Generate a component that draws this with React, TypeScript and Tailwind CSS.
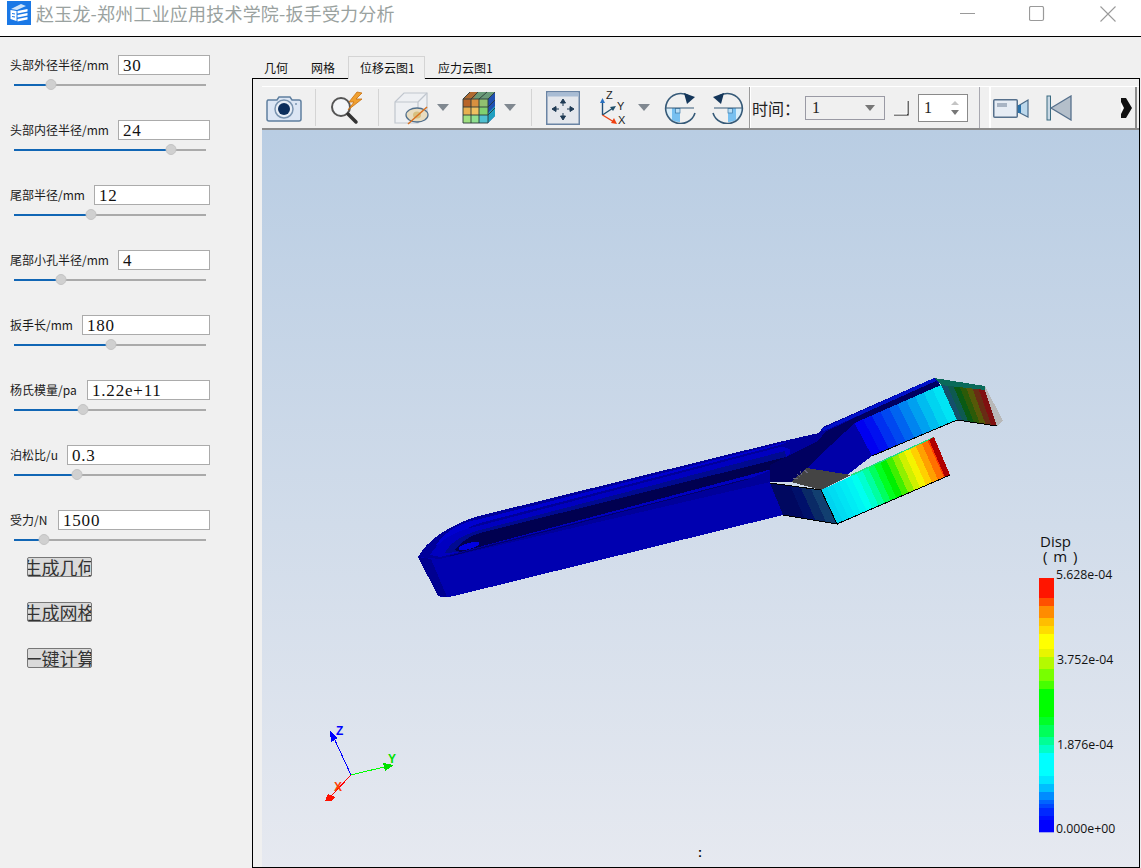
const CJK = "font-['Noto_Sans_CJK_SC','Noto_Sans',sans-serif]";

const FIELDS = [
  { label: '头部外径半径/mm', value: '30', labelW: 'w-[108px]', thumb: 51 },
  { label: '头部内径半径/mm', value: '24', labelW: 'w-[108px]', thumb: 171 },
  { label: '尾部半径/mm', value: '12', labelW: 'w-[84px]', thumb: 91 },
  { label: '尾部小孔半径/mm', value: '4', labelW: 'w-[108px]', thumb: 61 },
  { label: '扳手长/mm', value: '180', labelW: 'w-[72px]', thumb: 111 },
  { label: '杨氏模量/pa', value: '1.22e+11', labelW: 'w-[77px]', thumb: 83 },
  { label: '泊松比/u', value: '0.3', labelW: 'w-[57px]', thumb: 77 },
  { label: '受力/N', value: '1500', labelW: 'w-[48px]', thumb: 44 },
];

const BUTTONS = [
  { label: '生成几何', mt: 'mt-0' },
  { label: '生成网格', mt: 'mt-[25px]' },
  { label: '一键计算', mt: 'mt-[26px]' },
];

const LEGEND: [number, string][] = [
  [174, '#ff1500'], [234, '#ff5000'], [258, '#ff8c00'], [294, '#ffbe00'], [318, '#ffdc00'],
  [342, '#ffff00'], [387, '#e8f500'], [411, '#b4fa00'], [447, '#78ff00'], [483, '#46ff00'],
  [507, '#00ff00'], [591, '#00ff28'], [615, '#00ff5a'], [651, '#00ff96'], [675, '#00ffc8'],
  [699, '#00ffff'], [768, '#00e6ff'], [792, '#00beff'], [816, '#008cff'], [840, '#0064ff'],
  [852, '#0046ff'], [864, '#0028ff'], [888, '#000fff'], [900, '#0000ff'],
];

const LOWER_JAW = ['#00d4f0', '#00dcf2', '#00e4f4', '#00ecf4', '#00f4f4', '#00fff0', '#00ffd0', '#00ffa0', '#00ff60', '#00ff20', '#00f000', '#40f000', '#90f000', '#d0f000', '#f4f400', '#ffd000', '#ffa000', '#ff7000', '#ff3800'];
const UPPER_JAW = ['#0000f0', '#0010f0', '#0030f0', '#0048f0', '#0064f0', '#0084f0', '#00a0f0', '#00bcf0', '#00d4f0', '#00e4f4'];
const TIP = ['#14506a', '#0e5a50', '#0a5a14', '#2c5a08', '#565808', '#682c14', '#801010'];

type Pt = [number, number];

// slice a quad a-b-c-d into colour bands running from edge a-d to edge b-c
function Bands({ a, b, c, d, colors }: { a: Pt; b: Pt; c: Pt; d: Pt; colors: string[] }) {
  const mix = (p: Pt, q: Pt, t: number) => `${p[0] + (q[0] - p[0]) * t},${p[1] + (q[1] - p[1]) * t}`;
  return (
    <>
      {colors.map((color, i) => {
        const t0 = i / colors.length;
        const t1 = (i + 1) / colors.length;
        return <polygon key={i} fill={color} points={`${mix(a, b, t0)} ${mix(a, b, t1)} ${mix(d, c, t1)} ${mix(d, c, t0)}`} />;
      })}
    </>
  );
}

function Wrench() {
  return (
    <g shapeRendering="crispEdges">
      {/* handle rim */}
      <path fill="#00009a" d="M418 557Q432 532 475 517L779 442L819 433L823 427L934 378L942 381L900 410L854 423L846 475L790 482L770 482L440 559Z" />
      <path fill="#0000d0" d="M436 545Q450 524 480 519L790 441L780 445L480 523Q462 528 445 548Z" />
      {/* pocket */}
      <path fill="#0000c0" d="M430 555Q443 533 478 526L780 447Q795 447 788 456Q780 470 740 481L440 557Z" />
      <path fill="#000a90" d="M445 553Q452 538 480 530L785 451L786 457L480 536L458 552Z" />
      <path fill="#000050" d="M455 550Q465 537 480 533L786 457Q782 464 772 469L460 552Z" />
      <line x1="450" y1="556" x2="748" y2="479" stroke="#000070" strokeWidth="1" />
      <ellipse cx="469" cy="546" rx="11" ry="3" fill="#0000e0" transform="rotate(-16 469 546)" />
      <polygon fill="#000060" points="825,432 934,380 941,385 855,423 846,440 815,445" />
      <polygon fill="#0010c8" points="821,429 934,378 936,381 824,431" />
      {/* handle side */}
      <path fill="#0000b0" d="M418 557L440 559L770 482L783 515L454 596Q445 598 438 596Z" />
      <polygon fill="#000090" points="418,557 431,559 447,597 438,596" />
      {/* jaw root */}
      <polygon fill="#000060" points="770,465 810,445 854,423 807,468 791,482 770,482" />
      <polygon fill="#0000a8" points="854.5,423 872,456 847,475 807,468" />
      <polygon fill="#444444" points="807,468 851,475 821,490 791,482" />
      <path d="M797 474l3 3M800 471l2 4M804 470l4 3M793 478l5 1" stroke="#6a6a80" strokeWidth="1" />
      {/* front block */}
      <Bands a={[770, 483]} b={[821, 490]} c={[837, 524]} d={[783, 515]} colors={['#000860', '#000860', '#00106a', '#0a2a66', '#123f70']} />
      <polyline points="770,483 821,490 837,524 783,515" fill="none" stroke="#000" strokeWidth="1" />
      {/* upper jaw */}
      <Bands a={[854.5, 423]} b={[941, 385]} c={[957, 420]} d={[872, 456]} colors={UPPER_JAW} />
      <Bands a={[941, 385]} b={[985, 390]} c={[997, 426]} d={[957, 420]} colors={TIP} />
      <polygon fill="#0a6a5a" points="934,378 985,386 985,390 941,385" />
      <polygon fill="#b8b8b8" points="985,386 1003,421 997,426 985,390" />
      <line x1="872" y1="456" x2="957" y2="420" stroke="#000" strokeWidth="1" />
      <line x1="957" y1="420" x2="997" y2="426" stroke="#000" strokeWidth="1" />
      {/* lower jaw */}
      <polygon fill="#20e080" points="850,475 933,437 935,440 852,476" />
      <Bands a={[821, 490]} b={[933.6, 438]} c={[950, 475]} d={[837, 524]} colors={LOWER_JAW} />
      <polygon fill="#b00000" points="929,440 934,437 950,475 945,477" />
      <polyline points="821,490 837,524 950,475" fill="none" stroke="#000" strokeWidth="1" />
    </g>
  );
}

function Axes() {
  return (
    <g shapeRendering="crispEdges">
      <line x1="351" y1="775" x2="333" y2="736" stroke="#0000ff" strokeWidth="1" />
      <polygon fill="#0000ff" points="330,731 338,738 331,742" />
      <line x1="351" y1="775" x2="388" y2="766" stroke="#00ff00" strokeWidth="1" />
      <polygon fill="#00e000" points="394,765 383,763 385,771" />
      <line x1="351" y1="775" x2="331" y2="796" stroke="#ff0000" strokeWidth="1" />
      <polygon fill="#ff1000" points="325,801 328,794 335,797 331,801" />
      <text x="336" y="735" fontSize="12" fontWeight="700" fill="#0000ff" fontFamily="'Liberation Sans',sans-serif">Z</text>
      <text x="388" y="763" fontSize="12" fontWeight="700" fill="#00e000" fontFamily="'Liberation Sans',sans-serif">Y</text>
      <text x="334" y="791" fontSize="12" fontWeight="700" fill="#ff4000" fontFamily="'Liberation Sans',sans-serif">X</text>
    </g>
  );
}

function Legend() {
  const font = "'Open Sans','Liberation Sans',sans-serif";
  return (
    <g>
      {LEGEND.map(([y, color], i) => {
        const next = i + 1 < LEGEND.length ? LEGEND[i + 1][0] : 936;
        return <rect key={y} x="1039" y={520 + y / 3} width="15" height={(next - y) / 3 + 0.3} fill={color} />;
      })}
      <text x="1040" y="547" fontSize="15" fill="#111" fontFamily={font}>Disp</text>
      <text x="1043" y="562" fontSize="15" letterSpacing="1" fill="#111" fontFamily={font} xmlSpace="preserve">( m )</text>
      {[['5.628e-04', 1056, 579], ['3.752e-04', 1057, 664], ['1.876e-04', 1057, 749], ['0.000e+00', 1056, 833]].map(([t, x, y]) => (
        <text key={t as string} x={x} y={y} fontSize="12.3" fill="#111" fontFamily={font}>{t}</text>
      ))}
    </g>
  );
}

function Caret() {
  return <svg width="12" height="7" viewBox="0 0 12 7"><polygon points="0,0 12,0 6,7" fill="#808890" /></svg>;
}

function Sep() {
  return <div className="h-[37px] w-px bg-[#d4d4d4]" />;
}

function CameraIcon() {
  return (
    <svg width="36" height="32" viewBox="0 0 36 32">
      <path d="M2 8h9l2-3h11l2 3h7a2 2 0 0 1 2 2v17a2 2 0 0 1-2 2H3a2 2 0 0 1-2-2V10a2 2 0 0 1 1-2z" fill="#dce6f4" stroke="#5f7f9f" strokeWidth="1.5" />
      <circle cx="18" cy="17" r="9" fill="#e8eef6" stroke="#7a94b0" strokeWidth="1.5" />
      <circle cx="18" cy="17" r="6" fill="#0d2f5c" />
      <circle cx="30" cy="12" r="1" fill="#7a94b0" />
    </svg>
  );
}

function SearchBoltIcon() {
  return (
    <svg width="36" height="34" viewBox="0 0 36 34">
      <circle cx="13" cy="16" r="9" fill="#f4f6f8" stroke="#555" strokeWidth="2" />
      <line x1="20" y1="23" x2="28" y2="31" stroke="#333" strokeWidth="3.5" strokeLinecap="round" />
      <polygon points="29,1 21,11 26,11 20,19 34,8 28,8 34,2" fill="#f0a030" stroke="#c87010" strokeWidth="0.8" />
    </svg>
  );
}

function CubeEyeIcon() {
  return (
    <svg width="36" height="34" viewBox="0 0 36 34">
      <polygon points="1,11 10,2 33,2 33,23 24,32 1,32" fill="#eef0f3" stroke="#c0c6ce" strokeWidth="1.2" />
      <polyline points="1,11 24,11 24,32" fill="none" stroke="#c0c6ce" strokeWidth="1.2" />
      <line x1="24" y1="11" x2="33" y2="2" stroke="#c0c6ce" strokeWidth="1.2" />
      <ellipse cx="23" cy="24" rx="11" ry="7" fill="#e8dcc0" stroke="#52708c" strokeWidth="1.3" />
      <ellipse cx="23" cy="24" rx="4" ry="3.5" fill="#d8c080" />
      <line x1="14" y1="33" x2="33" y2="16" stroke="#d87020" strokeWidth="1.5" />
    </svg>
  );
}

function ColorCubeIcon() {
  return (
    <svg width="34" height="34" viewBox="0 0 34 34">
      <polygon points="1,8 8,1 33,1 26,8" fill="#6a9a78" />
      <polygon points="8,1 16,1 11,8 1,8" fill="#b06a30" />
      <rect x="1" y="8" width="8" height="8" fill="#b86428" />
      <rect x="9" y="8" width="8" height="8" fill="#d89040" />
      <rect x="17" y="8" width="9" height="8" fill="#90c070" />
      <rect x="1" y="16" width="8" height="8" fill="#e8b050" />
      <rect x="9" y="16" width="8" height="8" fill="#f0c060" />
      <rect x="17" y="16" width="9" height="8" fill="#80d070" />
      <rect x="1" y="24" width="8" height="8" fill="#a0e080" />
      <rect x="9" y="24" width="8" height="8" fill="#90e090" />
      <rect x="17" y="24" width="9" height="8" fill="#50c0d0" />
      <polygon points="26,8 33,1 33,25 26,32" fill="#2050b0" />
      <polygon points="26,22 33,15 33,25 26,32" fill="#20a0c0" />
      <path d="M1 8h25v24H1zM1 16h25M1 24h25M9 8v24M17 8v24M26 8l7-7M26 16l7-7M26 24l7-7M8 1l-7 7M16 1l-7 7M25 1l-8 7" fill="none" stroke="#2a3a3a" strokeWidth="0.9" />
    </svg>
  );
}

function FitIcon() {
  return (
    <svg width="34" height="34" viewBox="0 0 34 34">
      <rect x="0.75" y="0.75" width="32.5" height="32.5" fill="#e4e7ec" stroke="#6a84a4" strokeWidth="1.5" />
      <rect x="1.5" y="1.5" width="31" height="4" fill="#a8bcd4" />
      <g stroke="#1e3a54" strokeWidth="1" fill="#1e3a54">
        <line x1="17" y1="10" x2="17" y2="15" />
        <polygon points="17,8 14.5,12 19.5,12" />
        <line x1="17" y1="22" x2="17" y2="27" />
        <polygon points="17,29 14.5,25 19.5,25" />
        <line x1="8" y1="18" x2="13" y2="18" />
        <polygon points="6,18 10,15.5 10,20.5" />
        <line x1="21" y1="18" x2="26" y2="18" />
        <polygon points="28,18 24,15.5 24,20.5" />
      </g>
    </svg>
  );
}

function AxesIcon() {
  return (
    <svg width="30" height="36" viewBox="0 0 30 36">
      <line x1="2.5" y1="25" x2="2.5" y2="12" stroke="#20507a" strokeWidth="1.4" />
      <polygon points="2.5,8 0,13 5,13" fill="#2a70c0" />
      <line x1="2.5" y1="25" x2="13" y2="18" stroke="#20506a" strokeWidth="1.4" />
      <polygon points="16,16 10,17 13,21" fill="#20506a" />
      <line x1="2.5" y1="25" x2="14" y2="32" stroke="#f04010" strokeWidth="1.4" />
      <polygon points="17,34 11,33 14,28" fill="#f04010" />
      <text x="6" y="9" fontSize="11" fill="#222" fontFamily="'Liberation Sans',sans-serif">Z</text>
      <text x="17" y="20" fontSize="11" fill="#222" fontFamily="'Liberation Sans',sans-serif">Y</text>
      <text x="18" y="34" fontSize="11" fill="#222" fontFamily="'Liberation Sans',sans-serif">X</text>
    </svg>
  );
}

function RotateIcon({ flip }: { flip?: boolean }) {
  return (
    <svg width="32" height="32" viewBox="0 0 32 32" className={flip ? '-scale-x-100' : ''}>
      <path d="M16 16H2A14 14 0 0 0 16 30Z" fill="#d8eefa" />
      <path d="M16 16H8V28A14 14 0 0 0 16 30Z" fill="#78c0f0" />
      <rect x="11.5" y="16.5" width="4.5" height="4.5" fill="#b8def6" stroke="#3a7aaa" strokeWidth="0.7" />
      <path d="M31 21A15 15 0 1 1 24 3.5" fill="none" stroke="#365a78" strokeWidth="1.6" />
      <line x1="1" y1="16" x2="30" y2="16" stroke="#365a78" strokeWidth="1" />
      <polygon points="20,1 31,5 23,12" fill="#14365a" />
    </svg>
  );
}

function VideoIcon() {
  return (
    <svg width="36" height="22" viewBox="0 0 36 22">
      <rect x="0.75" y="2.75" width="23.5" height="17.5" rx="1" fill="#e6ecf4" stroke="#56708c" strokeWidth="1.5" />
      <rect x="4" y="6" width="10" height="4" fill="#a8b4c4" />
      <polygon points="25,9 35,3 35,20 25,15" fill="#bcd8ec" stroke="#4a6a88" strokeWidth="1.2" />
      <rect x="25" y="8" width="3" height="8" fill="#2a70a8" />
    </svg>
  );
}

function PrevIcon() {
  return (
    <svg width="26" height="26" viewBox="0 0 26 26">
      <rect x="1" y="1" width="3.5" height="24" fill="#c8d8e4" stroke="#3a6a80" strokeWidth="1" />
      <polygon points="5,13 25,1 25,25" fill="#b4bfca" stroke="#56708c" strokeWidth="1.3" />
    </svg>
  );
}

function Slider({ thumb }: { thumb: number }) {
  const x = thumb - 14;
  return (
    <div className="relative ml-[14px] mt-[9px] h-[2px] w-[192px] bg-[#aaaaaa]">
      <div className="h-[2px] bg-[#1166b5]" style={{ width: x }} />
      <div className="absolute top-[-5px] h-[11px] w-[11px] -translate-x-1/2 rounded-full border border-[#c4c4c4] bg-[#d0d0d0]" style={{ left: x }} />
    </div>
  );
}

function Field({ label, value, labelW, thumb }: (typeof FIELDS)[number]) {
  return (
    <div className="h-[65px]">
      <div className="flex h-[20px] items-center pl-[10px] pr-[42px]">
        <span className={`${labelW} shrink-0 whitespace-nowrap text-[12px] text-[#1a1a1a]`}>{label}</span>
        <div className="flex h-[20px] flex-1 items-center border border-[#ababab] bg-white pl-[4px] pt-px font-['Liberation_Serif',serif] text-[17px] tracking-[0.8px] text-[#111]">
          {value}
        </div>
      </div>
      <Slider thumb={thumb} />
    </div>
  );
}

export default function App() {
  return (
    <div className={`flex h-[868px] w-[1141px] flex-col overflow-hidden bg-[#f0f0f0] ${CJK}`}>
      {/* title bar */}
      <div className="flex h-[37px] shrink-0 items-start border-b border-black bg-white">
        <svg width="24" height="24" viewBox="0 0 24 24" className="ml-[7px] mt-px shrink-0">
          <rect width="24" height="24" fill="#1a78e6" />
          <path d="M4 8l10-5 5 2-9 4z" fill="#cfe4fa" />
          <path d="M3.5 9l6 1v10l-6-2z" fill="#fff" />
          <path d="M5 12.5l3 .5M5 15.5l3 .5" stroke="#1a78e6" strokeWidth="1" />
          <path d="M10.5 10l10-2v2.5l-10 2zM10.5 14l10-2v2.5l-10 2zM10.5 18l10-2v2.5l-10 2z" fill="#fff" />
        </svg>
        <span className="ml-[5px] mt-[1px] whitespace-nowrap text-[18px] leading-[24px] tracking-[0.2px] text-[#9aa2a0]">赵玉龙-郑州工业应用技术学院-扳手受力分析</span>
        <div className="ml-auto flex">
          <svg width="16" height="16" viewBox="0 0 16 16" className="mr-[53px] mt-[6px]"><line x1="0" y1="7.5" x2="15" y2="7.5" stroke="#9a9a9a" /></svg>
          <svg width="16" height="16" viewBox="0 0 16 16" className="mr-[55px] mt-[6px]"><rect x="0.5" y="0.5" width="14" height="14" rx="1.5" fill="none" stroke="#9a9a9a" strokeWidth="1.2" /></svg>
          <svg width="16" height="16" viewBox="0 0 16 16" className="mr-[25px] mt-[6px]"><path d="M0.5 0.5l15 15M15.5 0.5l-15 15" stroke="#9a9a9a" strokeWidth="1.1" /></svg>
        </div>
      </div>

      <div className="flex flex-1">
        {/* parameters */}
        <div className="w-[252px] shrink-0 pt-[18px]">
          {FIELDS.map((f) => (
            <Field key={f.label} {...f} />
          ))}
          <div className="ml-[27px] mt-[-18px] flex flex-col">
            {BUTTONS.map((b) => (
              <div
                key={b.label}
                className={`${b.mt} flex h-[20px] w-[65px] items-center justify-center overflow-hidden whitespace-nowrap rounded-[2px] border border-[#777777] bg-[#dadada] text-[18px] leading-[20px] text-[#333]`}
              >
                <span className="shrink-0">{b.label}</span>
              </div>
            ))}
          </div>
        </div>

        {/* tabs + result view */}
        <div className="flex flex-1 flex-col pr-px pt-[19px]">
          <div className="relative z-10 -mb-px flex h-[23px] items-end pl-[12px] text-[12px] text-[#111]">
            <span className="h-[19px] w-[47px] leading-[15px]">几何</span>
            <span className="h-[19px] w-[37px] leading-[15px]">网格</span>
            <span className="h-[23px] w-[77px] border border-b-0 border-[#d4d4d4] bg-[#f0f0f0] pl-[11px] leading-[22px]">位移云图1</span>
            <span className="ml-[13px] h-[19px] leading-[15px]">应力云图1</span>
          </div>
          <div className="flex flex-1 flex-col border border-black pl-[9px] pt-[7px]">
            {/* toolbar */}
            <div className="flex h-[44px] shrink-0 items-center border-b-2 border-t border-b-[#8c8c8c] border-t-white bg-[#f0f0f0] text-[#222]">
              <div className="flex w-[44px] justify-center"><CameraIcon /></div>
              <div className="ml-[9px]"><Sep /></div>
              <div className="ml-[12px]"><SearchBoltIcon /></div>
              <div className="ml-[14px]"><Sep /></div>
              <div className="ml-[15px]"><CubeEyeIcon /></div>
              <div className="ml-[7px]"><Caret /></div>
              <div className="ml-[13px]"><ColorCubeIcon /></div>
              <div className="ml-[8px]"><Caret /></div>
              <div className="ml-[15px]"><Sep /></div>
              <div className="ml-[14px]"><FitIcon /></div>
              <div className="ml-[20px]"><AxesIcon /></div>
              <div className="ml-[8px]"><Caret /></div>
              <div className="ml-[14px]"><RotateIcon /></div>
              <div className="ml-[16px]"><RotateIcon flip /></div>
              <div className="ml-[5px] h-[41px] w-[2px] border-l border-l-[#9a9a9a] bg-white" />
              <span className="ml-[1px] w-[53px] whitespace-nowrap text-[16px]">时间：</span>
              <div className="flex h-[24px] w-[80px] items-center justify-between border border-[#9a9aa4] bg-[#f0f0f0] pl-[6px] pr-[9px] font-['Liberation_Serif',serif] text-[16px]">
                1
                <svg width="10" height="6" viewBox="0 0 10 6"><polygon points="0,0 10,0 5,6" fill="#777" /></svg>
              </div>
              <svg width="16" height="16" viewBox="0 0 16 16" className="ml-[8px]"><path d="M1 15h14V1" fill="none" stroke="#111" strokeWidth="1.2" /><path d="M1 14h13V1" fill="none" stroke="#fff" /></svg>
              <div className="ml-[9px] flex h-[28px] w-[50px] items-center justify-between border border-[#8a8a8a] bg-white pl-[5px] pr-[8px] font-['Liberation_Serif',serif] text-[16px]">
                1
                <svg width="8" height="16" viewBox="0 0 8 16"><polygon points="4,1 8,5 0,5" fill="#c4c4c4" /><polygon points="0,10 8,10 4,15" fill="#777" /></svg>
              </div>
              <div className="ml-[11px] h-[41px] w-px bg-[#a8a8b0]" />
              <div className="ml-[9px] flex h-[41px] w-[148px] items-center border-l-2 border-r-2 border-l-white border-r-[#8c8c8c] pl-[2px]">
                <VideoIcon />
                <div className="ml-[17px]"><PrevIcon /></div>
                <svg width="14" height="20" viewBox="0 0 14 20" className="ml-auto blur-[0.6px]">
                  <rect width="14" height="20" fill="#111" />
                  <path d="M5 0h9v20H5l6-10z" fill="#f0f0f0" />
                  <path d="M0 4l3 6-3 6z" fill="#fff" />
                </svg>
              </div>
            </div>

            {/* 3D view */}
            <div className="relative flex-1 bg-linear-to-b from-[#b9cde3] to-[#e6e9f0]">
              <svg className="absolute inset-0 h-full w-full" viewBox="262 130 877 737" preserveAspectRatio="none">
                <Wrench />
                <Axes />
                <Legend />
              </svg>
              <span className="absolute left-[436px] top-[714px] font-['Liberation_Sans',sans-serif] text-[12px] font-bold text-black">:</span>
            </div>
          </div>
        </div>
      </div>
    </div>
  );
}
